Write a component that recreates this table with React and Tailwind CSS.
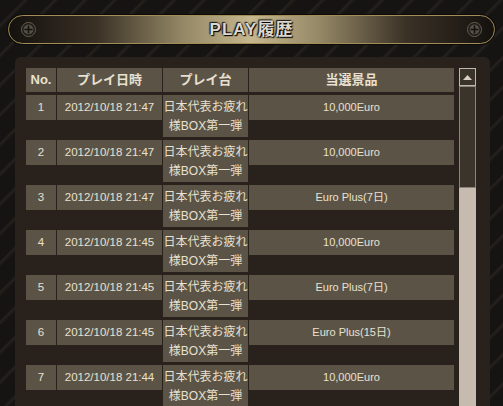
import React from "react";

const rows = [
  { no: 1, date: "2012/10/18 21:47", prize: "10,000Euro" },
  { no: 2, date: "2012/10/18 21:47", prize: "10,000Euro" },
  { no: 3, date: "2012/10/18 21:47", prize: "Euro Plus(7日)" },
  { no: 4, date: "2012/10/18 21:45", prize: "10,000Euro" },
  { no: 5, date: "2012/10/18 21:45", prize: "Euro Plus(7日)" },
  { no: 6, date: "2012/10/18 21:45", prize: "Euro Plus(15日)" },
  { no: 7, date: "2012/10/18 21:44", prize: "10,000Euro" },
];

const Screw = () => (
  <svg width="15" height="15" viewBox="0 0 15 15">
    <circle cx="7.5" cy="7.5" r="7" fill="#1b1815" stroke="#6a6154" strokeWidth="1" />
    <circle cx="7.5" cy="7.5" r="5" fill="#555046" />
    <path d="M7.5 3.5v8M3.5 7.5h8" stroke="#141210" strokeWidth="1.6" />
  </svg>
);

const Cell = ({ w, children, className = "" }) => (
  <div className={`${w} bg-[#5b5446] text-center ${className}`}>{children}</div>
);

const App = () => {
  return (
    <div className="w-[503px] h-[406px] overflow-hidden bg-[repeating-linear-gradient(135deg,#161412_0px,#161412_16px,#25221e_18px,#161412_21px)] font-['Liberation_Sans','Noto_Sans_CJK_JP',sans-serif]">
      <div className="pt-[14px] px-[7px]">
        <div className="h-[31px] rounded-full bg-[#0d0b09] p-[1px]">
          <div className="h-full rounded-full border border-[#a38d56] bg-[linear-gradient(90deg,#14110e_0%,#3a3126_18%,#958866_36%,#c6b78e_50%,#958866_64%,#3a3126_82%,#14110e_100%)] flex items-center justify-between px-[12px]">
            <Screw />
            <span className="text-[17px] font-bold tracking-[1px] text-[#dcd8d0] [text-shadow:0_0_2px_#000,1px_1px_1px_#000,-1px_-1px_1px_#222]">
              PLAY履歴
            </span>
            <Screw />
          </div>
        </div>
      </div>

      <div className="mt-[12px] ml-[15px] w-[475px] h-[400px] rounded-t-[6px] bg-[#29221c] pt-[11px] pl-[11px] flex items-start">
        <div className="w-[428px] text-[12px] text-[#e8e0d0]">
          <div className="flex gap-px mb-[3px] h-[24px] font-bold text-[13px] leading-[24px]">
            <Cell w="w-[30px]">No.</Cell>
            <Cell w="w-[105px]">プレイ日時</Cell>
            <Cell w="w-[85px]">プレイ台</Cell>
            <Cell w="w-[205px]">当選景品</Cell>
          </div>
          {rows.map((r) => (
            <div key={r.no} className="flex items-start gap-px mb-[3px] leading-[19px]">
              <Cell w="w-[30px]" className="py-[3px] text-[11.5px]">{r.no}</Cell>
              <Cell w="w-[105px]" className="py-[3px] text-[11.5px]">{r.date}</Cell>
              <Cell w="w-[85px]" className="pt-[3px] pb-[1px]">
                日本代表お疲れ
                <br />
                様BOX第一弾
              </Cell>
              <Cell w="w-[205px]" className="py-[3px] text-[11px]">{r.prize}</Cell>
            </div>
          ))}
        </div>

        <div className="ml-[5px] w-[17px] flex flex-col">
          <div className="h-[18px] border border-[#bdb7ad] bg-[#3a332a] flex items-center justify-center">
            <svg width="9" height="5" viewBox="0 0 9 5">
              <path d="M4.5 0L9 5H0z" fill="#d9cfc2" />
            </svg>
          </div>
          <div className="h-[102px] border border-[#8a857b] bg-[#3b342b]" />
          <div className="h-[300px] bg-[#c7bbb0]" />
        </div>
      </div>
    </div>
  );
};

export default App;
